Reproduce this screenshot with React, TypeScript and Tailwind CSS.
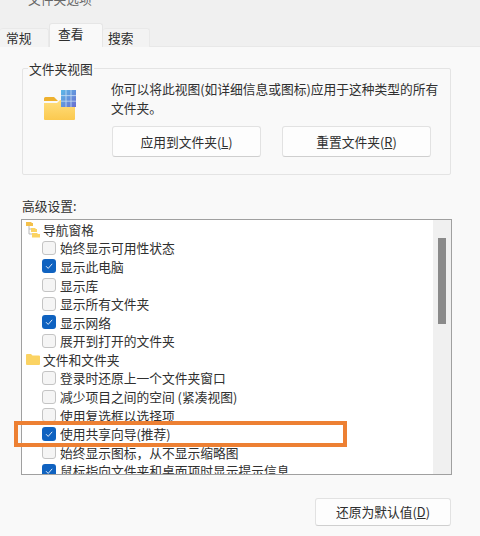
const fontStack = { fontFamily: '"Noto Sans CJK SC", "Noto Sans", sans-serif' }

function Tab({ label, active, className }: { label: string; active?: boolean; className: string }) {
  if (active) {
    return (
      <div className={`relative z-10 -mt-1 flex h-[24px] items-center rounded-t-[3px] border-x border-t border-[#e6e6e6] bg-[#f9f9f9] pb-1 text-[12.75px] text-[#2e2e2e] ${className}`}>
        {label}
      </div>
    )
  }
  return (
    <div className={`flex h-[19px] items-center rounded-t-[3px] border-r border-t border-[#e9e9e9] bg-[#f3f3f3] text-[12.75px] text-[#2e2e2e] ${className}`}>
      {label}
    </div>
  )
}

function WinButton({ children, className }: { children: React.ReactNode; className: string }) {
  return (
    <div
      className={`flex items-center justify-center rounded-[3px] border border-[#e2e2e2] border-b-[#cfcfcf] bg-[#fdfdfd] text-[12.75px] text-[#2e2e2e] ${className}`}
    >
      {children}
    </div>
  )
}

function FolderView() {
  return (
    <svg width="34" height="32" viewBox="0 0 34 32">
      <defs>
        <linearGradient id="grid" x1="0" y1="0" x2="1" y2="1">
          <stop offset="0" stopColor="#5cb8e8" />
          <stop offset="1" stopColor="#6a6fd0" />
        </linearGradient>
        <linearGradient id="body" x1="0" y1="0" x2="0" y2="1">
          <stop offset="0" stopColor="#ffdf7e" />
          <stop offset="1" stopColor="#fbc94f" />
        </linearGradient>
      </defs>
      <path d="M1 8.5a1.5 1.5 0 0 1 1.5-1.5H11l4 4H1z" fill="#eeb12f" />
      <path d="M1 13h13l3-3h15v19a1 1 0 0 1-1 1H2a1 1 0 0 1-1-1z" fill="url(#body)" />
      <rect x="18" y="0" width="15" height="17" fill="url(#grid)" />
      <path d="M23 0v17M28 0v17M18 5.6h15M18 11.2h15" stroke="#c9ddf2" strokeWidth="0.8" />
    </svg>
  )
}

function FolderSmall() {
  return (
    <svg width="14" height="12" viewBox="0 0 14 12">
      <path d="M0 2a1 1 0 0 1 1-1h4l1.5 1.5H13a1 1 0 0 1 1 1V11a1 1 0 0 1-1 1H1a1 1 0 0 1-1-1z" fill="#fbd363" />
    </svg>
  )
}

function FolderTree() {
  return (
    <svg width="14" height="17" viewBox="0 0 14 17">
      <path d="M0 1h5l1 1h1v3H0z" fill="#f4c04a" />
      <path d="M3 5v3h2M3 8v5h3" stroke="#b9b9b9" strokeWidth="1" fill="none" />
      <path d="M5 7h4l1 1h1v3H5z" fill="#fbd363" />
      <path d="M6 12h5l1 1h2v3.5H6z" fill="#fbd363" />
    </svg>
  )
}

function Check({ checked }: { checked?: boolean }) {
  if (checked) {
    return (
      <span className="flex h-[14px] w-[14px] shrink-0 items-center justify-center rounded-[3px] bg-[#0f62c0]">
        <svg width="10" height="10" viewBox="0 0 10 10">
          <path d="M2 5.2 4.2 7.4 8.2 2.8" stroke="#dfeaf8" strokeWidth="1" fill="none" />
        </svg>
      </span>
    )
  }
  return <span className="h-[14px] w-[14px] shrink-0 rounded-[3px] border border-[#c4c4c4] bg-[#f5f5f5]" />
}

function Row({ label, checked }: { label: string; checked?: boolean }) {
  return (
    <div className="flex h-[18.6px] items-center gap-[4px] pl-[20px] text-[12.75px] whitespace-nowrap text-[#303030]">
      <Check checked={checked} />
      <span>{label}</span>
    </div>
  )
}

function Heading({ label, icon }: { label: string; icon: React.ReactNode }) {
  return (
    <div className="flex h-[18.6px] items-center text-[12.75px] whitespace-nowrap text-[#303030]">
      <span className="flex w-[21px] justify-center pl-[1px]">{icon}</span>
      <span>{label}</span>
    </div>
  )
}

const navItems = [
  { label: "始终显示可用性状态" },
  { label: "显示此电脑", checked: true },
  { label: "显示库" },
  { label: "显示所有文件夹" },
  { label: "显示网络", checked: true },
  { label: "展开到打开的文件夹" },
]

const fileItems = [
  { label: "登录时还原上一个文件夹窗口" },
  { label: "减少项目之间的空间 (紧凑视图)" },
  { label: "使用复选框以选择项" },
  { label: "使用共享向导(推荐)", checked: true },
  { label: "始终显示图标，从不显示缩略图" },
  { label: "鼠标指向文件夹和桌面项时显示提示信息", checked: true },
]

export default function App() {
  return (
    <div className="relative h-[536px] w-[480px] overflow-hidden bg-[#f9f9f9]" style={fontStack}>
      {/* title and tabs */}
      <div className="h-[47px] border-b border-[#e8e8e8] bg-[#f0f0f0]">
        <div className="h-[19px] overflow-hidden pl-[28px]">
          <div className="-mt-[10px] text-[12.75px] leading-[18px] text-[#666]">文件夹选项</div>
        </div>
        <div className="mt-[9px] flex h-[19px] items-end">
          <Tab label="常规" className="w-[49px] pl-[6px]" />
          <Tab label="查看" active className="w-[54px] pl-[8px]" />
          <Tab label="搜索" className="w-[47px] pl-[5px]" />
        </div>
      </div>

      <div className="px-[22px]">
        {/* folder views group */}
        <div className="relative mt-[21px] h-[107px] w-[429px] rounded-[2px] border border-[#e4e4e4]">
          <div className="absolute -top-[9px] left-[5px] bg-[#f9f9f9] px-[1px] text-[12.75px] leading-[18px] text-[#303030]">
            文件夹视图
          </div>
          <div className="flex pt-[21px] pl-[20px]">
            <FolderView />
            <div className="ml-[34px] w-[332px]">
              <p className="-mt-[10px] text-[12.75px] leading-[18.5px] text-[#303030]">
                你可以将此视图(如详细信息或图标)应用于这种类型的所有文件夹。
              </p>
              <div className="mt-[9px] flex gap-[21px] pl-[1px]">
                <WinButton className="h-[31px] w-[149px]">
                  应用到文件夹(<span className="underline">L</span>)
                </WinButton>
                <WinButton className="h-[31px] w-[149px]">
                  重置文件夹(<span className="underline">R</span>)
                </WinButton>
              </div>
            </div>
          </div>
        </div>

        {/* advanced settings */}
        <div className="mt-[22px] text-[12.75px] leading-[18px] text-[#303030]">高级设置:</div>
        <div className="-ml-px mt-[4px] flex h-[256px] w-[431px] overflow-hidden border border-[#a0a0a0] bg-white">
          <div className="min-w-0 flex-1 overflow-hidden">
            <Heading label="导航窗格" icon={<FolderTree />} />
            {navItems.map((item) => (
              <Row key={item.label} label={item.label} checked={item.checked} />
            ))}
            <Heading label="文件和文件夹" icon={<FolderSmall />} />
            {fileItems.map((item) => (
              <Row key={item.label} label={item.label} checked={item.checked} />
            ))}
          </div>
          <div className="w-[18px] shrink-0 bg-[#f0f0f0] pt-[18px] pl-[5px]">
            <div className="h-[86px] w-[8px] bg-[#8a8a8a]" />
          </div>
        </div>

        <div className="mt-[23px] flex justify-end pr-[7px]">
          <WinButton className="h-[28px] w-[136px]">
            还原为默认值(<span className="underline">D</span>)
          </WinButton>
        </div>
      </div>

      {/* orange annotation */}
      <div className="absolute top-[421px] left-[14px] h-[26px] w-[333px] border-[4px] border-[#ed8033]" />
    </div>
  )
}
